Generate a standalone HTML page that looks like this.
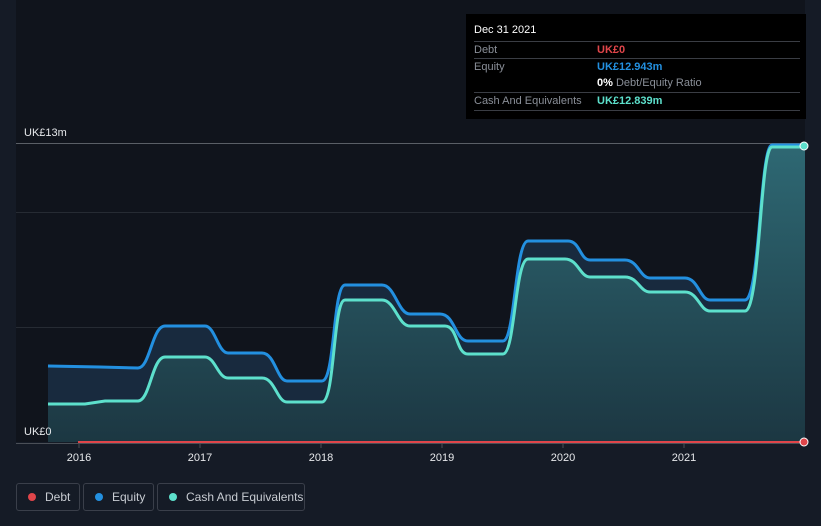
<!DOCTYPE html><html><head><style>
body{margin:0;width:821px;height:526px;background:#151b26;font-family:"Liberation Sans",sans-serif;overflow:hidden;position:relative}
.tt{position:absolute;left:466px;top:14px;width:340px;height:105px;background:#000;font-size:11px;color:#8a8f98}
.tt .r{position:absolute;left:8px;right:6px;border-top:1px solid #3a3d44;height:17px;line-height:17px}
.leg{position:absolute;top:483px;height:26px;border:1px solid #3a3f4a;border-radius:3px;color:#c8ccd2;font-size:12px;line-height:26px}
.leg i{position:absolute;left:11px;top:9px;width:8px;height:8px;border-radius:50%}
</style></head><body>
<svg width="821" height="526" style="position:absolute;left:0;top:0">
<defs><linearGradient id="g" x1="0" y1="0" x2="0" y2="1"><stop offset="0" stop-color="#2e6873"/><stop offset="1" stop-color="#1c3742"/></linearGradient></defs>
<rect x="16" y="0" width="789" height="442" fill="#0f1219"/>
<rect x="16" y="0" width="789" height="442" fill="#141a24" opacity="0.3"/>
<line x1="16" y1="143.5" x2="805" y2="143.5" stroke="#5a5f66"/>
<line x1="16" y1="212.5" x2="805" y2="212.5" stroke="#262b33"/>
<line x1="16" y1="327.5" x2="805" y2="327.5" stroke="#262b33"/>
<path d="M48 366 L100 367 L138 368 C150 368 152 326 165 326 L205 326 C215 326 218 353 228 353 L262 353 C275 353 277 381 287 381 L322 381 C335 381 333 285 345 285 L382 285 C395 285 398 314 410 314 L440 314 C455 314 455 341 468 341 L503 341 C515 341 515 241 528 241 L568 241 C580 241 580 260 590 260 L625 260 C638 260 640 278 650 278 L685 278 C698 278 700 300 710 300 L745 300 C760 300 760 145 772 145 L805 145 L805 442 L48 442Z" fill="#182a3e"/>
<path d="M48 404 L85 404 L105 401 L138 401 C150 401 152 357 165 357 L205 357 C215 357 218 378 228 378 L262 378 C275 378 277 402 287 402 L322 402 C335 402 333 300 345 300 L382 300 C395 300 398 326 410 326 L445 326 C458 326 456 354 468 354 L503 354 C515 354 515 259 528 259 L565 259 C578 259 580 277 590 277 L625 277 C638 277 640 292 650 292 L685 292 C698 292 700 311 710 311 L745 311 C760 311 760 147 772 147 L805 147 L805 442 L48 442Z" fill="url(#g)"/>
<path d="M48 366 L100 367 L138 368 C150 368 152 326 165 326 L205 326 C215 326 218 353 228 353 L262 353 C275 353 277 381 287 381 L322 381 C335 381 333 285 345 285 L382 285 C395 285 398 314 410 314 L440 314 C455 314 455 341 468 341 L503 341 C515 341 515 241 528 241 L568 241 C580 241 580 260 590 260 L625 260 C638 260 640 278 650 278 L685 278 C698 278 700 300 710 300 L745 300 C760 300 760 145 772 145 L805 145" fill="none" stroke="#2390e0" stroke-width="3"/>
<path d="M48 404 L85 404 L105 401 L138 401 C150 401 152 357 165 357 L205 357 C215 357 218 378 228 378 L262 378 C275 378 277 402 287 402 L322 402 C335 402 333 300 345 300 L382 300 C395 300 398 326 410 326 L445 326 C458 326 456 354 468 354 L503 354 C515 354 515 259 528 259 L565 259 C578 259 580 277 590 277 L625 277 C638 277 640 292 650 292 L685 292 C698 292 700 311 710 311 L745 311 C760 311 760 147 772 147 L805 147" fill="none" stroke="#5de0cc" stroke-width="3"/>
<line x1="16" y1="443.5" x2="805" y2="443.5" stroke="#4a4f57"/>
<line x1="78" y1="442" x2="805" y2="442" stroke="#e0454a" stroke-width="2"/>
<circle cx="804" cy="442" r="4" fill="#e0454a" stroke="#fff" stroke-width="1"/>
<circle cx="804" cy="146" r="4" fill="#5de0cc" stroke="#fff" stroke-width="1"/>
<g stroke="#4a4f57"><line x1="79" y1="444" x2="79" y2="448"/><line x1="200" y1="444" x2="200" y2="448"/><line x1="321" y1="444" x2="321" y2="448"/><line x1="442" y1="444" x2="442" y2="448"/><line x1="563" y1="444" x2="563" y2="448"/><line x1="684" y1="444" x2="684" y2="448"/></g>
<g fill="#e6e8eb" font-size="11" text-anchor="middle" font-family="Liberation Sans,sans-serif"><text x="79" y="461">2016</text><text x="200" y="461">2017</text><text x="321" y="461">2018</text><text x="442" y="461">2019</text><text x="563" y="461">2020</text><text x="684" y="461">2021</text></g>
<g fill="#e6e8eb" font-size="11" font-family="Liberation Sans,sans-serif"><text x="24" y="136">UK£13m</text><text x="24" y="435">UK£0</text></g>
</svg>
<div class="tt">
<div style="position:absolute;left:8px;top:10px;color:#fff;font-size:11px">Dec 31 2021</div>
<div class="r" style="top:27px">Debt<span style="position:absolute;left:123px;color:#e0454a;font-weight:bold">UK£0</span></div>
<div class="r" style="top:44px">Equity<span style="position:absolute;left:123px;color:#2390e0;font-weight:bold">UK£12.943m</span></div>
<div class="r" style="top:61px;border:0"><span style="position:absolute;left:123px"><b style="color:#fff">0%</b> Debt/Equity Ratio</span></div>
<div class="r" style="top:78px">Cash And Equivalents<span style="position:absolute;left:123px;color:#5de0cc;font-weight:bold">UK£12.839m</span></div>
<div class="r" style="top:96px;height:0"></div>
</div>
<div class="leg" style="left:16px;width:62px"><i style="background:#e0454a"></i><span style="position:absolute;left:28px">Debt</span></div>
<div class="leg" style="left:83px;width:69px"><i style="background:#2390e0"></i><span style="position:absolute;left:28px">Equity</span></div>
<div class="leg" style="left:157px;width:146px"><i style="background:#5de0cc"></i><span style="position:absolute;left:28px">Cash And Equivalents</span></div>
</body></html>
